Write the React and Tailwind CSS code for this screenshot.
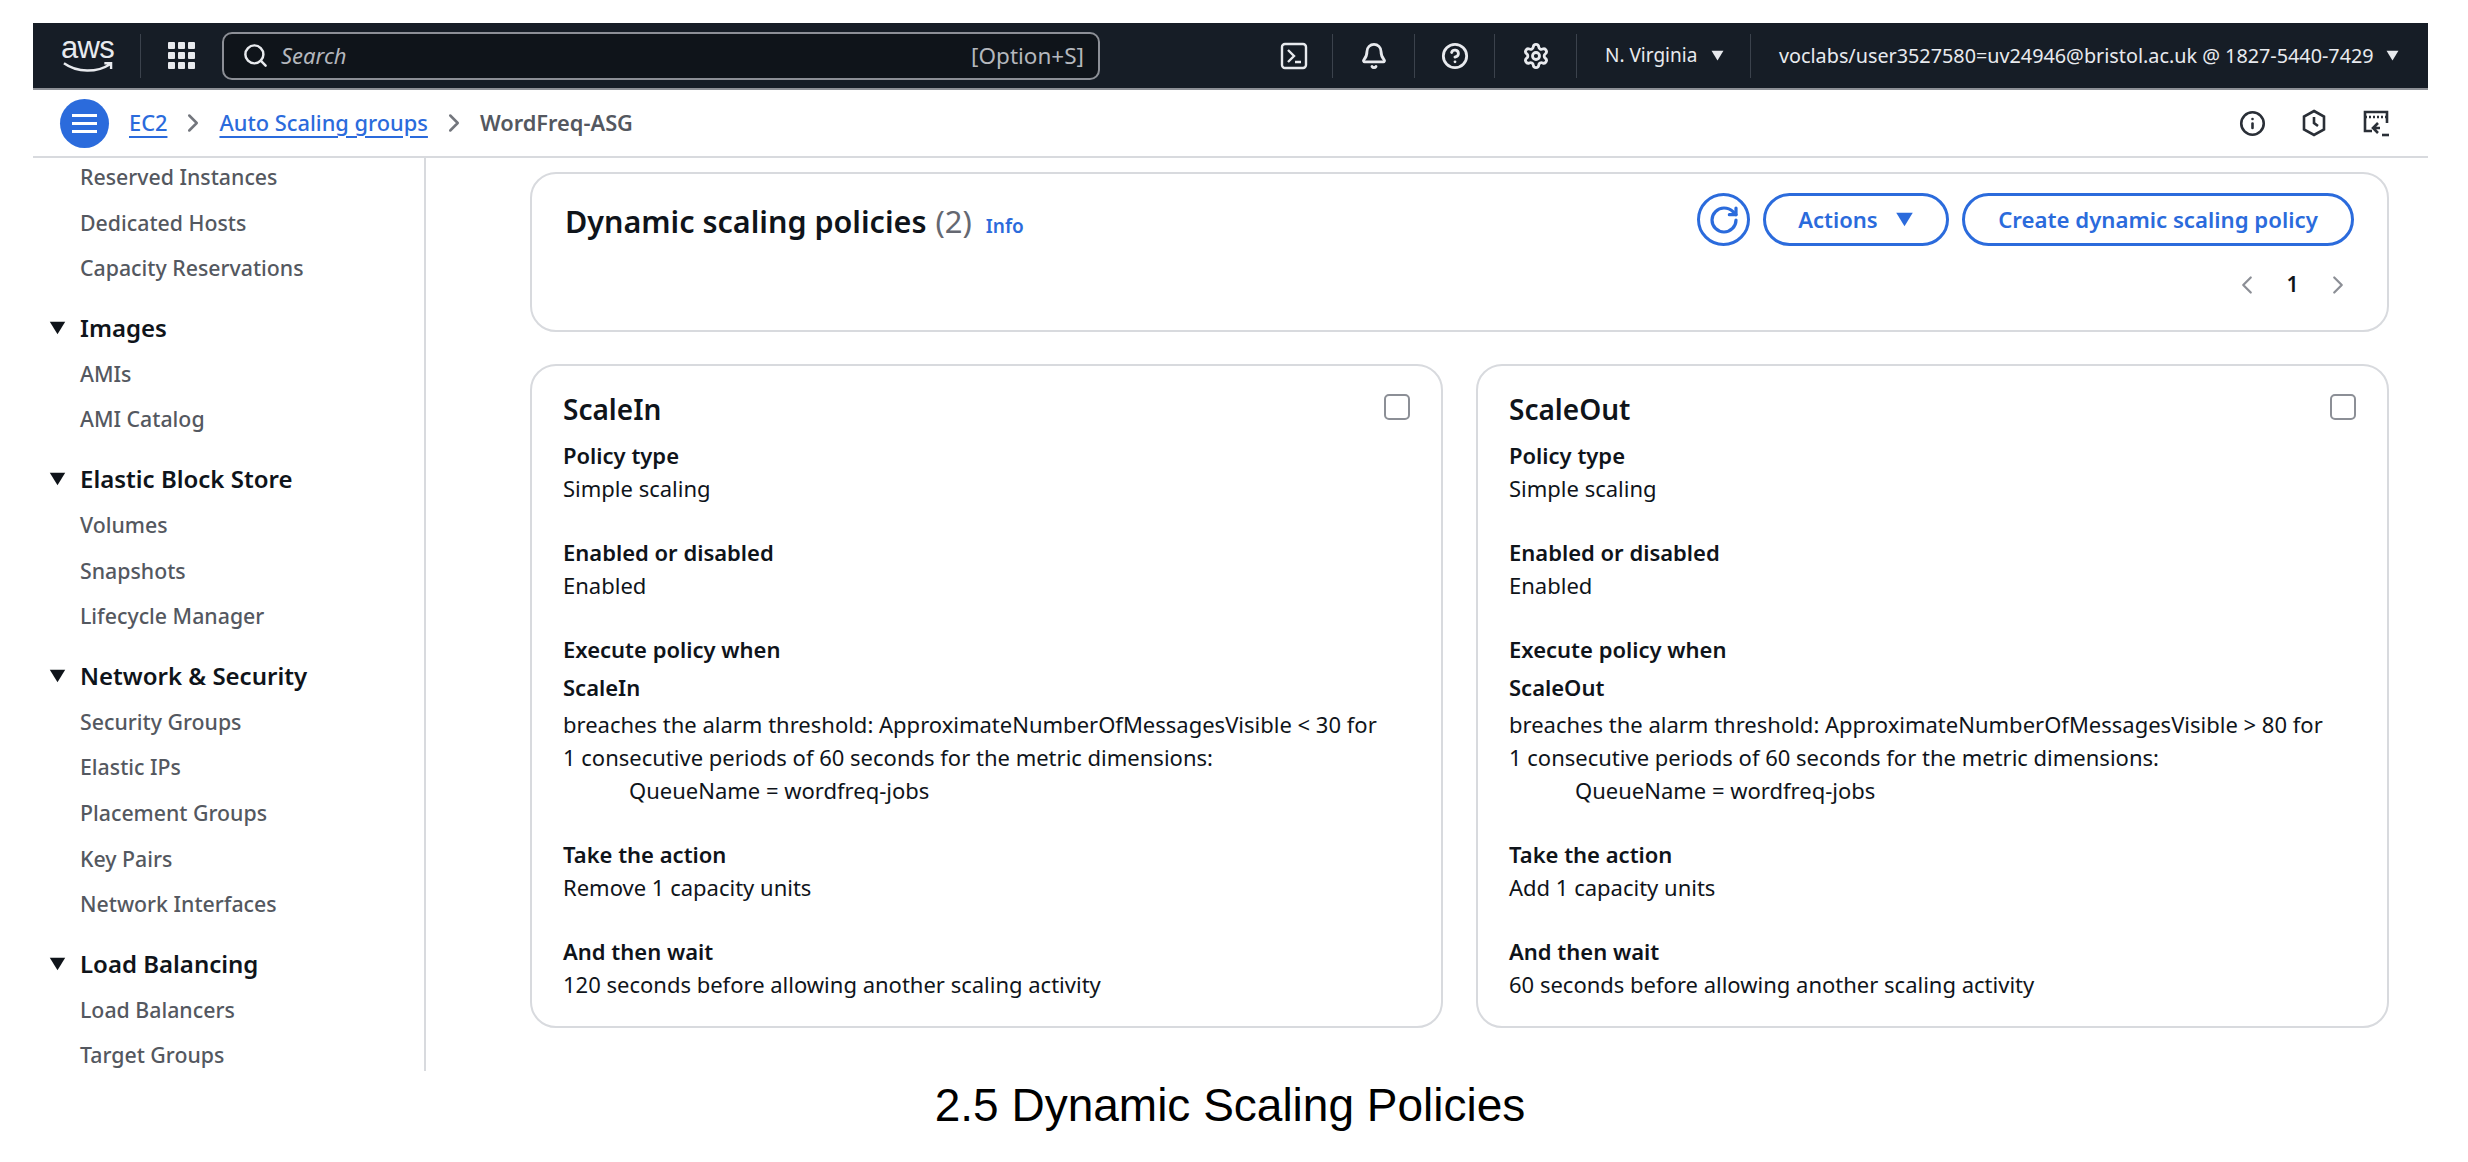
import { Bell, ChevronLeft, ChevronRight, CircleHelp, Info, RotateCw, Search, Settings } from "lucide-react";

const sideGroups = [
  { items: ["Reserved Instances", "Dedicated Hosts", "Capacity Reservations"] },
  { title: "Images", items: ["AMIs", "AMI Catalog"] },
  { title: "Elastic Block Store", items: ["Volumes", "Snapshots", "Lifecycle Manager"] },
  { title: "Network & Security", items: ["Security Groups", "Elastic IPs", "Placement Groups", "Key Pairs", "Network Interfaces"] },
  { title: "Load Balancing", items: ["Load Balancers", "Target Groups"] },
];

const policies = [
  { name: "ScaleIn", sign: "< 30", action: "Remove 1 capacity units", wait: "120 seconds before allowing another scaling activity" },
  { name: "ScaleOut", sign: "> 80", action: "Add 1 capacity units", wait: "60 seconds before allowing another scaling activity" },
];

const Caret = ({ className }) => (
  <svg viewBox="0 0 12 10" className={className} fill="currentColor">
    <path d="M0.5 0.5h11L6 9.5z" />
  </svg>
);

const Sep = () => <div className="w-px h-[44px] bg-[#3b424c]" />;

const Field = ({ label, children }) => (
  <div className="mb-[31px]">
    <div className="font-semibold leading-[33px] text-[#0f141a]">{label}</div>
    {children}
  </div>
);

const PolicyCard = ({ p }) => (
  <div className="flex-1 h-[664px] border-2 border-[#d8dade] rounded-[26px] pl-[31px] pr-[31px] pt-[24px] text-[22px] text-[#0f141a]">
    <div className="flex items-start justify-between h-[49px]">
      <h3 className="text-[28px] font-semibold leading-[38px]">{p.name}</h3>
      <div className="w-[26px] h-[26px] mt-[4px] border-2 border-[#8c8f96] rounded-[5px]" />
    </div>
    <Field label="Policy type"><div className="leading-[33px]">Simple scaling</div></Field>
    <Field label="Enabled or disabled"><div className="leading-[33px]">Enabled</div></Field>
    <Field label="Execute policy when">
      <div className="font-semibold leading-[33px] mt-[5px]">{p.name}</div>
      <div className="leading-[33px] mt-[4px]">
        breaches the alarm threshold: ApproximateNumberOfMessagesVisible {p.sign} for
        <br />1 consecutive periods of 60 seconds for the metric dimensions:
        <br /><span className="pl-[66px]">QueueName = wordfreq-jobs</span>
      </div>
    </Field>
    <Field label="Take the action"><div className="leading-[33px]">{p.action}</div></Field>
    <Field label="And then wait"><div className="leading-[33px]">{p.wait}</div></Field>
  </div>
);

export default function App() {
  return (
    <div className="w-[2468px] h-[1162px] bg-white overflow-hidden pt-[23px] pl-[33px] font-['Noto_Sans',sans-serif]">
      <div className="w-[2395px]">
        {/* top bar */}
        <header className="h-[67px] bg-[#161d26] border-b-2 border-[#8d9096] flex items-center text-[#e8eaee]">
          <div className="w-[107px] pl-[29px] pr-[27px] flex flex-col items-center shrink-0">
            <span className="text-[31px] leading-[24px] font-['Liberation_Sans',sans-serif] tracking-tight">aws</span>
            <svg viewBox="0 0 52 14" className="w-[50px] h-[14px] mt-[1px]" fill="none" stroke="currentColor" strokeWidth="2.5">
              <path d="M1 2c14 10 34 10 48 1M43 2h7v6" />
            </svg>
          </div>
          <Sep />
          <svg viewBox="0 0 27 27" className="w-[27px] h-[27px] ml-[27px] mr-[27px]" fill="currentColor">
            <rect x="0" y="0" width="7" height="7" rx="1" /><rect x="10" y="0" width="7" height="7" rx="1" /><rect x="20" y="0" width="7" height="7" rx="1" />
            <rect x="0" y="10" width="7" height="7" rx="1" /><rect x="10" y="10" width="7" height="7" rx="1" /><rect x="20" y="10" width="7" height="7" rx="1" />
            <rect x="0" y="20" width="7" height="7" rx="1" /><rect x="10" y="20" width="7" height="7" rx="1" /><rect x="20" y="20" width="7" height="7" rx="1" />
          </svg>
          <div className="w-[878px] h-[48px] rounded-[10px] border-2 border-[#8c8f96] bg-[#0f141a] flex items-center pl-[18px] pr-[14px]">
            <Search size={27} strokeWidth={2.2} />
            <span className="ml-[12px] italic text-[22px] text-[#b4b7bd]">Search</span>
            <span className="ml-auto text-[22.5px] text-[#b4b7bd]">[Option+S]</span>
          </div>
          <div className="w-[209px] shrink-0 flex justify-end pr-[1px]">
            <svg viewBox="0 0 28 28" className="w-[28px] h-[28px]" fill="none" stroke="currentColor" strokeWidth="2.4">
              <rect x="2" y="2" width="24" height="24" rx="3" /><path d="M8 8l6 6-6 6M15 20h6" />
            </svg>
          </div>
          <div className="ml-[23px]"><Sep /></div>
          <div className="w-[81px] flex justify-center"><Bell size={28} strokeWidth={2.4} /></div>
          <Sep />
          <div className="w-[79px] flex justify-center"><CircleHelp size={28} strokeWidth={2.4} /></div>
          <Sep />
          <div className="w-[81px] flex justify-center"><Settings size={28} strokeWidth={2.4} /></div>
          <Sep />
          <div className="w-[173px] pl-[28px] flex items-center text-[19px]">
            <span>N. Virginia</span>
            <Caret className="w-[13px] h-[11px] ml-[14px]" />
          </div>
          <Sep />
          <div className="pl-[28px] flex items-center text-[19.8px] whitespace-nowrap">
            <span>voclabs/user3527580=uv24946@bristol.ac.uk @ 1827-5440-7429</span>
            <Caret className="w-[13px] h-[11px] ml-[12px]" />
          </div>
        </header>

        {/* breadcrumb bar */}
        <div className="h-[68px] border-b-2 border-[#d8dade] flex items-center pl-[27px] text-[21.8px]">
          <div className="w-[49px] h-[49px] rounded-full bg-[#2b6bdc] flex flex-col items-center justify-center gap-[5px]">
            <div className="w-[25px] h-[3px] bg-white" />
            <div className="w-[25px] h-[3px] bg-white" />
            <div className="w-[25px] h-[3px] bg-white" />
          </div>
          <a className="ml-[20px] text-[#2b6bdc] font-medium underline underline-offset-[5px]">EC2</a>
          <ChevronRight size={30} className="mx-[11px] text-[#73767d]" />
          <a className="text-[#2b6bdc] font-medium underline underline-offset-[5px]">Auto Scaling groups</a>
          <ChevronRight size={30} className="mx-[11px] text-[#73767d]" />
          <span className="font-semibold text-[#545860]">WordFreq-ASG</span>
          <div className="ml-auto flex items-center gap-[35px] pr-[38px] text-[#2a2f37]">
            <Info size={27} strokeWidth={2.3} />
            <svg viewBox="0 0 26 28" className="w-[26px] h-[28px]" fill="none" stroke="currentColor" strokeWidth="2.6">
              <path d="M13 2l10 5.5v13L13 26 3 20.5v-13z" /><path d="M13 8v6l4 3" />
            </svg>
            <svg viewBox="0 0 28 28" className="w-[28px] h-[28px]" fill="none" stroke="currentColor" strokeWidth="2.6">
              <path d="M10 22H3V3h22v11" /><path d="M3 8h22" strokeDasharray="2 2" /><path d="M16 14l-5 5 5 5M11 19h7" /><path d="M20 26h7" />
            </svg>
          </div>
        </div>

        <div className="flex">
          {/* side nav */}
          <aside className="w-[393px] h-[913px] overflow-hidden border-r-2 border-[#d8dade] shrink-0 text-[21.3px]">
            <div className="-mt-[2px]">
              {sideGroups.map((g, i) => (
                <div key={i} className={g.title ? "mt-[12px]" : ""}>
                  {g.title && (
                    <div className="flex items-center h-[48px] pb-[2px] text-[24px] font-semibold text-[#0f141a]">
                      <Caret className="w-[17px] h-[14px] ml-[16px] mr-[14px] text-[#0f141a]" />
                      {g.title}
                    </div>
                  )}
                  {g.items.map((it) => (
                    <div key={it} className="h-[45.6px] leading-[41px] pl-[47px] text-[#545860] font-medium">{it}</div>
                  ))}
                </div>
              ))}
            </div>
          </aside>

          {/* main content */}
          <main className="pl-[104px] pt-[14px] w-[1963px] shrink-0">
            <section className="h-[160px] border-2 border-[#d8dade] rounded-[26px] pl-[33px] pr-[33px] pt-[19px] flex justify-between">
              <div className="flex items-baseline mt-[5px]">
                <h2 className="text-[30.5px] font-semibold text-[#0f141a] leading-[40px]">Dynamic scaling policies</h2>
                <span className="ml-[9px] text-[31px] text-[#656871]">(2)</span>
                <a className="ml-[14px] text-[19px] font-semibold text-[#2b6bdc]">Info</a>
              </div>
              <div className="flex flex-col items-end">
                <div className="flex items-center text-[#2b6bdc]">
                  <div className="w-[53px] h-[53px] rounded-full border-[3px] border-[#2b6bdc] flex items-center justify-center">
                    <RotateCw size={32} strokeWidth={2.4} />
                  </div>
                  <div className="ml-[13px] w-[186px] h-[53px] rounded-full border-[3px] border-[#2b6bdc] flex items-center justify-center text-[22px] font-semibold">
                    Actions
                    <Caret className="w-[19px] h-[15px] ml-[17px]" />
                  </div>
                  <div className="ml-[13px] w-[392px] h-[53px] rounded-full border-[3px] border-[#2b6bdc] flex items-center justify-center text-[22.2px] font-semibold">
                    Create dynamic scaling policy
                  </div>
                </div>
                <div className="flex items-center mt-[23px] mr-[1px] text-[#8c8f96]">
                  <ChevronLeft size={30} strokeWidth={1.8} />
                  <span className="w-[61px] text-center text-[21px] font-semibold text-[#0f141a]">1</span>
                  <ChevronRight size={30} strokeWidth={1.8} />
                </div>
              </div>
            </section>
            <div className="flex gap-[33px] mt-[32px]">
              {policies.map((p) => <PolicyCard key={p.name} p={p} />)}
            </div>
          </main>
        </div>
      </div>
      <div className="w-[2460px] -ml-[33px] text-center pt-[9px] text-[46px] leading-[50px] text-black font-['Liberation_Sans',sans-serif]">
        2.5 Dynamic Scaling Policies
      </div>
    </div>
  );
}
